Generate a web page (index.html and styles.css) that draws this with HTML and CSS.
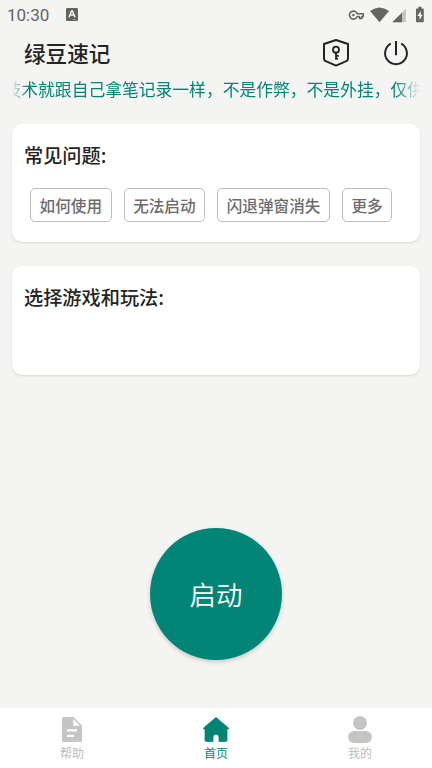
FILE: index.html
```html
<!DOCTYPE html>
<html lang="zh-CN">
<head>
<meta charset="utf-8">
<title>绿豆速记</title>
<link rel="stylesheet" href="styles.css">
</head>
<body>
<div class="app">
  <div class="status">
    <span class="clock">10:30</span>
    <svg class="ime" width="12" height="13" viewBox="0 0 12 13"><rect width="12" height="13" rx="1.2" fill="#636363"/><path d="M3 9.2 5.6 3h.8L9 9.2M4.2 7h3.6" fill="none" stroke="#f4f4f3" stroke-width="1.5"/><path d="M6.5 11.5h3.5" stroke="#aaa" stroke-width=".7"/></svg>
    <svg class="signals" width="78" height="18" viewBox="0 0 78 18">
      <path d="M10.2 7.700H16.300V10.500H14.900V12.400H12.400V10.500H10.200A4 4 0 1 1 10.200 7.700Z" fill="none" stroke="#656565" stroke-width="1.600" stroke-linejoin="round"/>
      <circle cx="6.400" cy="9.100" r="1.300" fill="#656565"/>
      <path d="M23 5.100Q32.500-1.900 42 5.100L32.500 16.200Z" fill="#656563"/>
      <path d="M58.900 2.800V16.200H45.300Z" fill="#c3c3c1"/><path d="M55 6.700V16.200H45.300Z" fill="#656563"/>
      <path d="M69.900 2.500h1.400V.7h3.200v1.800h1.400q.9 0 .9.900v11.900q0 .9-.9.900h-6q-.9 0-.9-.9V3.400q0-.9.900-.9Z" fill="#656563"/>
      <path d="M73.700 4.900 70.500 10.100h2v4l3.100-5.300h-1.900Z" fill="#fff"/>
    </svg>
  </div>
  <header class="header">
    <h1>绿豆速记</h1>
    <svg class="shield" width="30" height="30" viewBox="0 0 30 30" fill="none" stroke="#242424" stroke-width="2" stroke-linejoin="round"><path d="M15 2 27 6V20.500Q27 22.300 25.300 23.200L15 27.600 4.700 23.200Q3 22.300 3 20.500V6Z"/><g stroke-width="1.800"><circle cx="15" cy="11.700" r="3"/><path d="M15 14.700v7M15 17.800h2.900M15 20.600h2"/></g></svg>
    <svg class="power" width="30" height="30" viewBox="0 0 30 30" fill="none" stroke="#242424" stroke-width="2"><path d="M9.800 5.700A10.900 10.900 0 1 0 20.200 5.700M15 3V17.300"/></svg>
  </header>
  <div class="marquee"><span>技术就跟自己拿笔记录一样，不是作弊，不是外挂，仅供</span></div>
  <main class="content">
    <section class="card faq">
      <h2>常见问题:</h2>
      <div class="tags"><button>如何使用</button><button>无法启动</button><button>闪退弹窗消失</button><button>更多</button></div>
    </section>
    <section class="card games"><h2>选择游戏和玩法:</h2></section>
    <button class="start">启动</button>
  </main>
  <nav class="nav">
    <a><svg width="30" height="30" viewBox="0 0 30 30"><path d="M6.700 3H16.500L25 11.500V26.300Q25 28 23.300 28H6.700Q5 28 5 26.300V4.700Q5 3 6.700 3Z" fill="#c5c5c5"/><path d="M16.300 5V11.700H23ZM10 15.200H20V17.400H10ZM10 20.800H17V23H10Z" fill="#fff"/></svg><span>帮助</span></a>
    <a class="active"><svg width="30" height="30" viewBox="0 0 30 30"><path d="M15 3.400 27.500 14V14.900H26V26Q26 27.500 24.500 27.500H18V23Q18 20.300 15 20.300T12 23V27.500H5.500Q4 27.500 4 26V14.900H2.500V14Z" fill="#028577" stroke="#028577" stroke-width=".8" stroke-linejoin="round"/></svg><span>首页</span></a>
    <a><svg width="30" height="30" viewBox="0 0 30 30" fill="#c5c5c5"><circle cx="15" cy="9" r="7"/><rect x="3" y="17" width="24" height="12" rx="6"/></svg><span>我的</span></a>
  </nav>
</div>
</body>
</html>
```
FILE: styles.css
```css
* { box-sizing: border-box; }
body {
  margin: 0;
  font-family: "Noto Sans CJK SC", sans-serif;
  background: #f4f4f3;
  color: #242424;
}
.app {
  width: 432px;
  height: 768px;
  display: flex;
  flex-direction: column;
  overflow: hidden;
}
.status {
  height: 29px;
  display: flex;
  align-items: center;
  padding: 0 7px 0 7px;
  flex: none;
}
.clock {
  font: 17px/29px Roboto, sans-serif;
  color: #636363;
  width: 59px;
  padding-top: 2px;
}
.signals { margin-left: auto; }
.header {
  height: 48px;
  display: flex;
  align-items: center;
  padding: 0 21px 0 24px;
  flex: none;
}
h1, h2 { margin: 0; font-weight: 500; }
h1 { font-size: 21.6px; line-height: 48px; }
.shield { margin-left: auto; }
.power { margin-left: 30px; }
.marquee {
  height: 24px;
  margin: 0 12px;
  overflow: hidden;
  white-space: nowrap;
  font-size: 16.8px;
  line-height: 24px;
  color: #028577;
  flex: none;
  -webkit-mask-image: linear-gradient(90deg, transparent, #000 16px, #000 calc(100% - 24px), transparent);
  mask-image: linear-gradient(90deg, transparent, #000 16px, #000 calc(100% - 24px), transparent);
}
.marquee span { margin-left: -7.5px; }
.content {
  flex: 1;
  padding: 23px 12px 0;
  display: flex;
  flex-direction: column;
}
.card {
  background: #fff;
  border-radius: 10px;
  box-shadow: 0 1px 2px rgba(0, 0, 0, .13);
  padding: 17px 12px 0;
}
.card h2 { font-size: 19.2px; line-height: 28px; }
.faq { height: 118px; margin-bottom: 24px; }
.games { height: 109px; }
.tags {
  display: flex;
  gap: 12px;
  padding-left: 6px;
  margin-top: 19px;
}
.tags button {
  height: 34px;
  padding: 0 8.6px;
  border: 1px solid #bdbdbd;
  border-radius: 5px;
  background: #fff;
  color: #6c6c6c;
  font: 500 15.6px/32px "Noto Sans CJK SC", sans-serif;
}
.start {
  width: 132px;
  height: 132px;
  margin: 153px auto 0;
  padding: 0;
  border: 0;
  border-radius: 50%;
  background: #028577;
  color: #fff;
  font: 350 26.4px/132px "Noto Sans CJK SC", sans-serif;
  box-shadow: 0 2px 4px rgba(0, 0, 0, .18);
}
.nav {
  height: 60px;
  background: #fff;
  display: flex;
  flex: none;
}
.nav a {
  flex: 1;
  display: flex;
  flex-direction: column;
  align-items: center;
  padding-top: 6px;
  font-size: 12px;
  line-height: 16px;
  color: #bcbcbc;
}
.nav svg { margin-bottom: 1px; }
.nav .active { color: #028577; }
```
